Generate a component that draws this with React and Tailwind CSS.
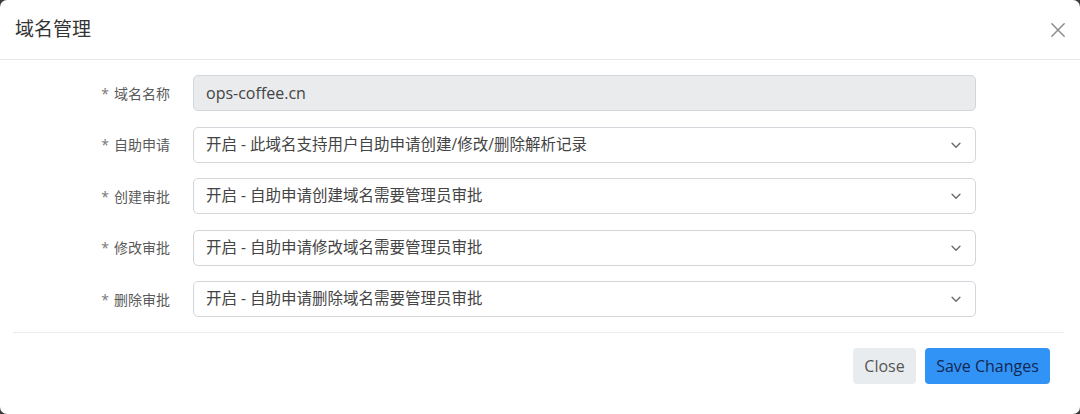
import React from "react";

const font = { fontFamily: '"Open Sans", "Noto Sans CJK SC", sans-serif' };

function Chevron() {
  return (
    <svg width="14" height="14" viewBox="0 0 16 16" fill="none" stroke="#6b6b6b" strokeWidth="1.6" strokeLinecap="round" strokeLinejoin="round">
      <path d="M3.5 6l4.5 4.5L12.5 6" />
    </svg>
  );
}

function Row({ label, children }) {
  return (
    <div className="flex items-center">
      <div className="w-[193px] pr-[23px] text-right text-[14px] text-[#5a5a5a]">
        <span className="text-[#777] mr-[5px]">*</span>
        {label}
      </div>
      <div className="w-[783px]">{children}</div>
    </div>
  );
}

function Select({ text }) {
  return (
    <div className="h-[36px] flex items-center justify-between rounded-[5px] border border-[#d3d6da] bg-white pl-[12px] pr-[12px] text-[15.5px] text-[#444]">
      <span>{text}</span>
      <Chevron />
    </div>
  );
}

export default function App() {
  return (
    <div className="w-[1080px] h-[414px] bg-[#3a3a3a]" style={font}>
      <div className="w-full h-full bg-white rounded-[7px] flex flex-col">
        <div className="h-[60px] flex items-center justify-between border-b border-[#e6e6e6] pl-[15px] pr-[13px]">
          <div className="text-[19px] text-[#333]">域名管理</div>
          <svg width="18" height="18" viewBox="0 0 16 16" stroke="#8a8a8a" strokeWidth="1.3" strokeLinecap="round">
            <path d="M2.5 2.5l11 11M13.5 2.5l-11 11" />
          </svg>
        </div>
        <div className="pt-[15px] pb-[15px] flex flex-col gap-[15.5px]">
          <Row label="域名名称">
            <div className="h-[36px] flex items-center rounded-[5px] border border-[#d3d6da] bg-[#e9ebed] pl-[12px] text-[16px] text-[#444]">
              ops-coffee.cn
            </div>
          </Row>
          <Row label="自助申请">
            <Select text="开启 - 此域名支持用户自助申请创建/修改/删除解析记录" />
          </Row>
          <Row label="创建审批">
            <Select text="开启 - 自助申请创建域名需要管理员审批" />
          </Row>
          <Row label="修改审批">
            <Select text="开启 - 自助申请修改域名需要管理员审批" />
          </Row>
          <Row label="删除审批">
            <Select text="开启 - 自助申请删除域名需要管理员审批" />
          </Row>
        </div>
        <div className="mx-[13px] mr-[16px] border-t border-[#ececec]"></div>
        <div className="flex justify-end gap-[9px] pt-[15px] pr-[30px]">
          <button className="h-[36px] w-[63px] rounded-[4px] bg-[#e9ecef] text-[16px] text-[#555]">Close</button>
          <button className="h-[36px] w-[125px] rounded-[4px] bg-[#3293f7] text-[16px] text-[#14284f]">Save Changes</button>
        </div>
      </div>
    </div>
  );
}
